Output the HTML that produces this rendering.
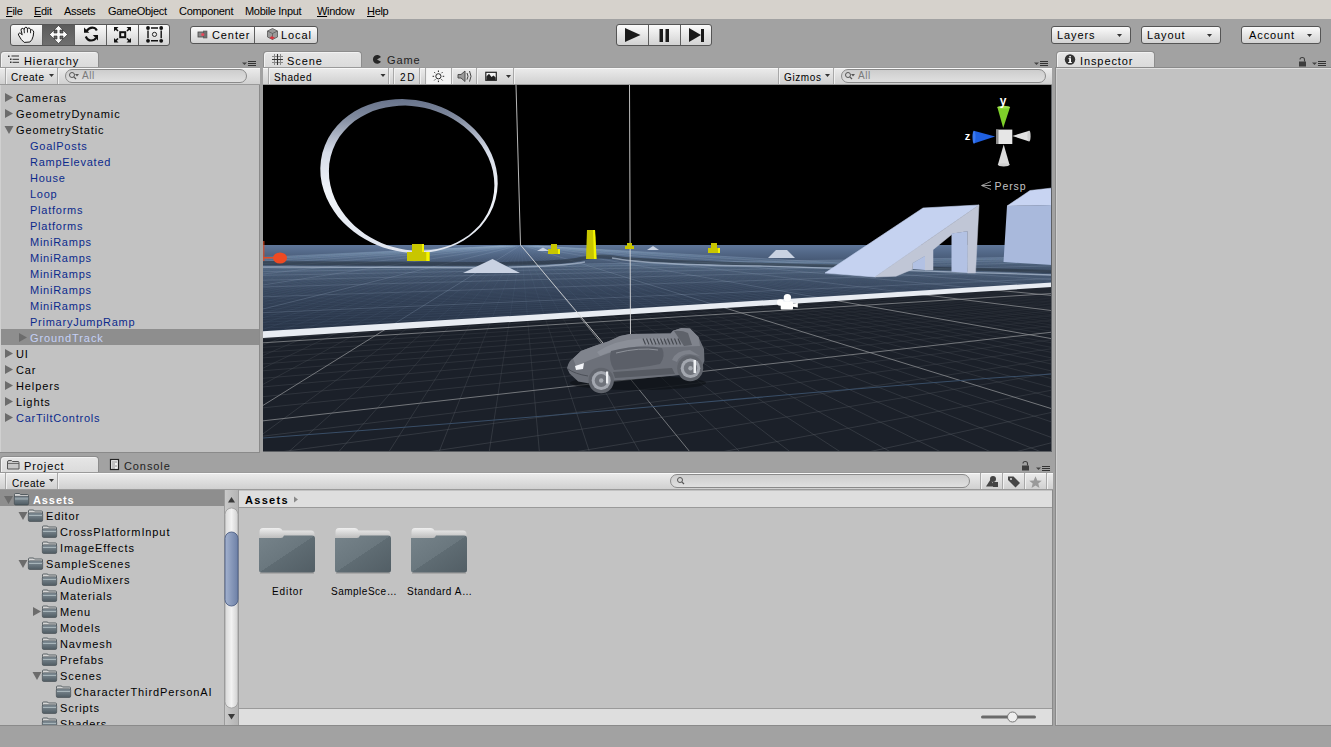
<!DOCTYPE html>
<html><head><meta charset="utf-8">
<style>
*{margin:0;padding:0;box-sizing:border-box}
html,body{width:1331px;height:747px;overflow:hidden;background:#a2a2a2;font-family:"Liberation Sans",sans-serif;font-size:11px;color:#000;position:relative}
.a{position:absolute}
.t{position:absolute;white-space:nowrap;line-height:13px;letter-spacing:0.9px}
.s{position:absolute;white-space:nowrap;line-height:12px;font-size:10px;letter-spacing:0.6px}
.menu{position:absolute;left:0;top:0;width:1331px;height:19px;background:#d6d2cc}
.menu span{position:absolute;top:5px;line-height:13px;color:#000;letter-spacing:-0.3px}
.btn{position:absolute;border:1px solid #555;border-radius:3px;background:linear-gradient(#fbfbfb,#d2d2d2);overflow:hidden}
.sep{position:absolute;top:0;bottom:0;width:1px;background:#5e5e5e}
.tab{position:absolute;height:17px;border-radius:4px 4px 0 0;background:linear-gradient(#e6e6e6,#dadada);border:1px solid #8d8d8d;border-bottom:none;box-shadow:inset 1px 1px 0 #f2f2f2}
.panel{position:absolute;background:#c2c2c2}
.tbar{position:absolute;height:18px;background:linear-gradient(#ececec,#d0d0d0);border-top:1px solid #9a9a9a;border-bottom:1px solid #9a9a9a;box-shadow:inset 0 1px 0 #f8f8f8}
.tsep{position:absolute;top:0;width:1px;height:16px;background:#a8a8a8;box-shadow:1px 0 0 #f0f0f0}
.search{position:absolute;height:14px;border:1px solid #8a8a8a;border-radius:7px;background:linear-gradient(#cdcdcd,#e0e0e0)}
.b{color:#0c2a8c;letter-spacing:0.75px}
.row{position:absolute;left:0;height:16px;width:100%}
.sel{background:#8e8e8e}
</style></head><body>
<!-- menu bar -->
<div class="menu">
<span style="left:6px"><u>F</u>ile</span><span style="left:34px"><u>E</u>dit</span><span style="left:64px">Assets</span><span style="left:108px">GameObject</span><span style="left:179px">Component</span><span style="left:245px">Mobile Input</span><span style="left:317px"><u>W</u>indow</span><span style="left:367px"><u>H</u>elp</span>
</div>

<!-- tools -->
<div class="btn" style="left:10px;top:24px;width:160px;height:22px">
 <div class="a" style="left:31px;top:0;width:32px;height:20px;background:linear-gradient(#5b5b5b,#6f6f6f)"></div>
 <div class="sep" style="left:31px"></div><div class="sep" style="left:63px"></div><div class="sep" style="left:95px"></div><div class="sep" style="left:127px"></div>
</div>
<div class="btn" style="left:190px;top:26px;width:128px;height:18px">
 <div class="sep" style="left:63px"></div>
 <span class="t" style="left:21px;top:2px">Center</span>
 <span class="t" style="left:90px;top:2px">Local</span>
</div>
<div class="btn" style="left:616px;top:24px;width:96px;height:22px">
 <div class="sep" style="left:31px"></div><div class="sep" style="left:63px"></div>
</div>
<div class="btn" style="left:1051px;top:26px;width:80px;height:18px"><span class="t" style="left:5px;top:2px">Layers</span></div>
<div class="btn" style="left:1141px;top:26px;width:80px;height:18px"><span class="t" style="left:5px;top:2px">Layout</span></div>
<div class="btn" style="left:1241px;top:26px;width:80px;height:18px"><span class="t" style="left:7px;top:2px">Account</span></div>

<!-- Hierarchy -->
<div class="tab" style="left:0;top:51px;width:99px"><span class="t" style="left:23px;top:3px">Hierarchy</span></div>
<div class="tbar" style="left:0;top:67px;width:260px">
 <div class="tsep" style="left:5px"></div><div class="tsep" style="left:57px"></div>
<span class="s" style="left:11px;top:4px">Create</span>
 <div class="search" style="left:65px;top:1px;width:182px"><span class="s" style="left:16px;top:0px;color:#7a7a7a">All</span></div>
</div>
<div class="panel" style="left:0;top:85px;width:260px;height:368px;border-right:1px solid #8a8a8a;border-bottom:1px solid #8a8a8a;box-shadow:inset 1px 0 0 #d0d0d0">
 <span class="t" style="left:16px;top:7px">Cameras</span>
 <span class="t" style="left:16px;top:23px">GeometryDynamic</span>
 <span class="t" style="left:16px;top:39px">GeometryStatic</span>
 <span class="t b" style="left:30px;top:55px">GoalPosts</span>
 <span class="t b" style="left:30px;top:71px">RampElevated</span>
 <span class="t b" style="left:30px;top:87px">House</span>
 <span class="t b" style="left:30px;top:103px">Loop</span>
 <span class="t b" style="left:30px;top:119px">Platforms</span>
 <span class="t b" style="left:30px;top:135px">Platforms</span>
 <span class="t b" style="left:30px;top:151px">MiniRamps</span>
 <span class="t b" style="left:30px;top:167px">MiniRamps</span>
 <span class="t b" style="left:30px;top:183px">MiniRamps</span>
 <span class="t b" style="left:30px;top:199px">MiniRamps</span>
 <span class="t b" style="left:30px;top:215px">MiniRamps</span>
 <span class="t b" style="left:30px;top:231px">PrimaryJumpRamp</span>
 <div class="a sel" style="left:1px;top:244px;width:258px;height:16px"></div>
 <span class="t" style="left:30px;top:247px;color:#c5d1f8">GroundTrack</span>
 <span class="t" style="left:16px;top:263px">UI</span>
 <span class="t" style="left:16px;top:279px">Car</span>
 <span class="t" style="left:16px;top:295px">Helpers</span>
 <span class="t" style="left:16px;top:311px">Lights</span>
 <span class="t b" style="left:16px;top:327px">CarTiltControls</span>
</div>

<!-- Scene -->
<div class="tab" style="left:263px;top:51px;width:99px"><span class="t" style="left:23px;top:3px">Scene</span></div>
<span class="t" style="left:387px;top:54px;color:#222">Game</span>
<div class="tbar" style="left:263px;top:67px;width:789px">
 <div class="tsep" style="left:5px"></div><div class="tsep" style="left:125px"></div>
 <span class="s" style="left:11px;top:4px">Shaded</span>
 <div class="tsep" style="left:130px"></div><div class="tsep" style="left:156px"></div>
 <span class="s" style="left:137px;top:4px;letter-spacing:1.8px">2D</span>
 <div class="a" style="left:163px;top:0;width:25px;height:16px;background:#f4f4f4"></div>
 <div class="tsep" style="left:162px"></div><div class="tsep" style="left:188px"></div><div class="tsep" style="left:213px"></div><div class="tsep" style="left:250px"></div>
 <div class="tsep" style="left:515px"></div><div class="tsep" style="left:570px"></div>
 <span class="s" style="left:521px;top:4px">Gizmos</span>
 <div class="search" style="left:578px;top:1px;width:205px"><span class="s" style="left:16px;top:0px;color:#7a7a7a">All</span></div>
</div>
<svg class="a" style="left:263px;top:85px" width="789" height="367" viewBox="263 85 789 367"><defs>
<linearGradient id="gfar" x1="0" y1="245" x2="0" y2="335" gradientUnits="userSpaceOnUse">
<stop offset="0" stop-color="#60779a"/>
<stop offset="0.1" stop-color="#506584"/>
<stop offset="0.25" stop-color="#3c4c64"/>
<stop offset="0.55" stop-color="#313f55"/>
<stop offset="1" stop-color="#283447"/>
</linearGradient>
<linearGradient id="gring" x1="0" y1="98" x2="0" y2="253" gradientUnits="userSpaceOnUse">
<stop offset="0" stop-color="#67728a"/>
<stop offset="0.12" stop-color="#7f899d"/>
<stop offset="0.35" stop-color="#d6dce8"/>
<stop offset="0.6" stop-color="#f1f4f9"/>
<stop offset="1" stop-color="#dfe4ee"/>
</linearGradient>
<linearGradient id="gfade" x1="0" y1="284" x2="0" y2="452" gradientUnits="userSpaceOnUse"><stop offset="0" stop-color="#fff" stop-opacity="0.15"/><stop offset="0.35" stop-color="#fff" stop-opacity="0.6"/><stop offset="1" stop-color="#fff" stop-opacity="1"/></linearGradient>
<mask id="mnear" maskUnits="userSpaceOnUse" x="263" y="85" width="789" height="367"><rect x="263" y="284" width="789" height="168" fill="url(#gfade)"/></mask>
<clipPath id="cnear"><polygon points="263,336 1052,286 1052,452 263,452"/></clipPath>
<clipPath id="cfar"><polygon points="263,245 1052,245 1052,284 263,334"/></clipPath>
</defs>
<rect x="263" y="85" width="789" height="367" fill="#000"/>
<polygon points="263,245 1052,245 1052,285 263,334" fill="url(#gfar)"/>
<polygon points="263,335 1052,285 1052,452 263,452" fill="#1b2029"/>
<g clip-path="url(#cnear)" fill="none">
<path d="M250.0 258.1L501.6 245.9M250.0 258.2L501.8 245.9M250.0 258.4L502.1 245.9M250.0 258.5L502.3 245.9M250.0 258.7L502.5 245.9M250.0 258.9L502.8 245.9M250.0 259.0L503.0 245.9M250.0 259.2L503.2 245.9M250.0 259.4L503.4 245.9M250.0 259.8L503.9 245.9M250.0 260.0L504.1 245.9M250.0 260.2L504.4 245.9M250.0 260.4L504.6 245.9M250.0 260.6L504.8 245.9M250.0 260.8L505.0 245.9M250.0 261.0L505.3 245.9M250.0 261.3L505.5 245.9M250.0 261.5L505.7 245.9M250.0 262.0L506.2 245.9M250.0 262.3L506.4 245.9M250.0 262.6L506.6 245.9M250.0 262.8L506.9 245.9M250.0 263.1L507.1 245.9M250.0 263.4L507.3 245.9M250.0 263.7L507.6 245.9M250.0 264.1L507.8 245.9M250.0 264.4L508.0 245.9M250.0 265.1L508.5 245.9M250.0 265.5L508.7 245.9M250.0 265.8L508.9 245.9M250.0 266.2L509.1 245.9M250.0 266.6L509.4 245.9M250.0 267.1L509.6 245.9M250.0 267.5L509.8 245.9M250.0 268.0L510.1 245.9M250.0 268.5L510.3 245.9M250.0 269.5L510.7 245.9M250.0 270.0L511.0 245.9M250.0 270.6L511.2 245.9M250.0 271.2L511.4 245.9M250.0 271.8L511.6 245.9M250.0 272.5L511.9 245.9M250.0 273.2L512.1 245.9M250.0 273.9L512.3 245.9M250.0 274.7L512.5 245.9M250.0 276.4L513.0 245.9M250.0 277.3L513.2 245.9M250.0 278.2L513.5 245.9M250.0 279.2L513.7 245.9M250.0 280.3L513.9 245.9M250.0 281.5L514.1 245.9M250.0 282.7L514.4 245.9M250.0 284.0L514.6 245.9M250.0 285.4L514.8 245.9M250.0 288.6L515.3 245.9M250.0 290.4L515.5 245.9M250.0 292.3L515.7 245.9M250.0 294.4L515.9 245.9M250.0 296.7L516.2 245.9M250.0 299.2L516.4 245.9M250.0 301.9L516.6 245.9M250.0 305.0L516.8 245.9M250.0 308.4L517.1 245.9M250.0 316.5L517.5 245.9M250.0 321.4L517.7 245.9M250.0 327.0L518.0 245.9M944.4 470.0L1065.0 439.3M250.0 333.5L518.2 245.9M784.7 470.0L1065.0 409.5M250.0 341.1L518.4 245.9M624.9 470.0L1065.0 387.7M250.0 350.1L518.6 245.9M465.1 470.0L1065.0 371.0M250.0 361.0L518.8 245.9M305.4 470.0L1065.0 357.7M250.0 374.4L519.1 245.9M250.0 456.0L1065.0 347.0M250.0 391.4L519.3 245.9M250.0 437.7L1065.0 338.2M250.0 443.4L519.7 245.9M250.0 409.2L1065.0 324.4M268.2 470.0L520.0 245.9M250.0 397.9L1065.0 318.9M322.7 470.0L520.2 245.9M250.0 388.1L1065.0 314.2M377.3 470.0L520.4 245.9M250.0 379.4L1065.0 310.0M431.9 470.0L520.6 245.9M250.0 371.8L1065.0 306.3M486.4 470.0L520.9 245.9M250.0 364.9L1065.0 303.0M541.0 470.0L521.1 245.9M250.0 358.8L1065.0 300.0M595.5 470.0L521.3 245.9M250.0 353.2L1065.0 297.3M650.1 470.0L521.5 245.9M250.0 348.2L1065.0 294.9M759.2 470.0L522.0 245.9M250.0 339.4L1065.0 290.7M813.8 470.0L522.2 245.9M250.0 335.6L1065.0 288.8M868.4 470.0L522.4 245.9M250.0 332.0L1065.0 287.1M922.9 470.0L522.6 245.9M250.0 328.8L1065.0 285.5M977.5 470.0L522.9 245.9M250.0 325.7L1065.0 284.0M1032.0 470.0L523.1 245.9M250.0 322.9L1065.0 282.7M1065.0 461.4L523.3 245.9M250.0 320.2L1065.0 281.4M1065.0 442.4L523.5 245.9M250.0 317.8L1065.0 280.2M1065.0 426.4L523.8 245.9M250.0 315.5L1065.0 279.1M1065.0 401.2L524.2 245.9M250.0 311.3L1065.0 277.0M1065.0 391.0L524.4 245.9M250.0 309.4L1065.0 276.1M1065.0 382.1L524.6 245.9M250.0 307.5L1065.0 275.2M1065.0 374.2L524.9 245.9M250.0 305.8L1065.0 274.4M1065.0 367.1L525.1 245.9M250.0 304.2L1065.0 273.6M1065.0 360.8L525.3 245.9M250.0 302.7L1065.0 272.9M1065.0 355.1L525.5 245.9M250.0 301.2L1065.0 272.2M1065.0 350.0L525.8 245.9M250.0 299.8L1065.0 271.5M1065.0 345.3L526.0 245.9M250.0 298.5L1065.0 270.9M1065.0 337.1L526.4 245.9M250.0 296.0L1065.0 269.7M1065.0 333.4L526.6 245.9M250.0 294.9L1065.0 269.1M1065.0 330.1L526.9 245.9M250.0 293.8L1065.0 268.6M1065.0 327.0L527.1 245.9M250.0 292.8L1065.0 268.1M1065.0 324.1L527.3 245.9M250.0 291.8L1065.0 267.6M1065.0 321.4L527.5 245.9M250.0 290.8L1065.0 267.1M1065.0 318.9L527.7 245.9M250.0 289.9L1065.0 266.7M1065.0 316.5L528.0 245.9M250.0 289.0L1065.0 266.3M1065.0 314.3L528.2 245.9M250.0 288.1L1065.0 265.8M1065.0 310.3L528.6 245.9M250.0 286.5L1065.0 265.1M1065.0 308.4L528.8 245.9M250.0 285.8L1065.0 264.7M1065.0 306.7L529.1 245.9M250.0 285.0L1065.0 264.3M1065.0 305.0L529.3 245.9M250.0 284.3L1065.0 264.0M1065.0 303.5L529.5 245.9M250.0 283.6L1065.0 263.7M1065.0 302.0L529.7 245.9M250.0 283.0L1065.0 263.4M1065.0 300.6L529.9 245.9M250.0 282.3L1065.0 263.0M1065.0 299.2L530.2 245.9M250.0 281.7L1065.0 262.7M1065.0 297.9L530.4 245.9M250.0 281.1L1065.0 262.5M1065.0 295.6L530.8 245.9M250.0 280.0L1065.0 261.9M1065.0 294.4L531.0 245.9M250.0 279.4L1065.0 261.6M1065.0 293.4L531.3 245.9M250.0 278.9L1065.0 261.4M1065.0 292.4L531.5 245.9M250.0 278.4L1065.0 261.1M1065.0 291.4L531.7 245.9M250.0 277.9L1065.0 260.9M1065.0 290.4L531.9 245.9M250.0 277.4L1065.0 260.7M1065.0 289.5L532.1 245.9M250.0 277.0L1065.0 260.5M1065.0 288.7L532.4 245.9M250.0 276.5L1065.0 260.2M1065.0 287.8L532.6 245.9M250.0 276.1L1065.0 260.0M1065.0 286.3L533.0 245.9M250.0 275.2L1065.0 259.6M1065.0 285.5L533.2 245.9M250.0 274.8L1065.0 259.4M1065.0 284.8L533.5 245.9M250.0 274.4L1065.0 259.2M1065.0 284.1L533.7 245.9M250.0 274.0L1065.0 259.0M1065.0 283.4L533.9 245.9M250.0 273.7L1065.0 258.9M1065.0 282.8L534.1 245.9M250.0 273.3L1065.0 258.7M1065.0 282.2L534.3 245.9M250.0 272.9L1065.0 258.5M1065.0 281.6L534.6 245.9M250.0 272.6L1065.0 258.3M1065.0 281.0L534.8 245.9M250.0 272.3L1065.0 258.2M1065.0 279.9L535.2 245.9M250.0 271.6L1065.0 257.9M1065.0 279.3L535.4 245.9M250.0 271.3L1065.0 257.7M1065.0 278.8L535.6 245.9M250.0 271.0L1065.0 257.6M1065.0 278.3L535.9 245.9M250.0 270.7L1065.0 257.4M1065.0 277.8L536.1 245.9M250.0 270.4L1065.0 257.3M1065.0 277.3L536.3 245.9M250.0 270.1L1065.0 257.1M1065.0 276.9L536.5 245.9M250.0 269.8L1065.0 257.0M1065.0 276.4L536.7 245.9M250.0 269.5L1065.0 256.9M1065.0 276.0L536.9 245.9M250.0 269.3L1065.0 256.7" stroke="#5a5f66" stroke-width="0.7" stroke-opacity="0.6" mask="url(#mnear)"/>
<path d="M250.0 257.9L501.4 245.9M250.0 259.6L503.7 245.9M250.0 261.8L506.0 245.9M250.0 264.7L508.2 245.9M250.0 269.0L510.5 245.9M250.0 275.5L512.8 245.9M250.0 287.0L515.0 245.9M250.0 312.2L517.3 245.9M250.0 413.5L519.5 245.9M250.0 422.3L1065.0 330.7M704.7 470.0L521.8 245.9M250.0 343.6L1065.0 292.7M1065.0 412.8L524.0 245.9M250.0 313.3L1065.0 278.0M1065.0 341.0L526.2 245.9M250.0 297.2L1065.0 270.3M1065.0 312.2L528.4 245.9M250.0 287.3L1065.0 265.5M1065.0 296.7L530.6 245.9M250.0 280.5L1065.0 262.2M1065.0 287.0L532.8 245.9M250.0 275.6L1065.0 259.8M1065.0 280.4L535.0 245.9M250.0 271.9L1065.0 258.0M1065.0 275.6L537.2 245.9M250.0 269.0L1065.0 256.6" stroke="#8a8c90" stroke-width="1" stroke-opacity="0.8"/>
</g>
<g clip-path="url(#cfar)" fill="none">
<path d="M250.0 258.1L501.6 245.9M250.0 258.2L501.8 245.9M250.0 258.4L502.1 245.9M250.0 258.5L502.3 245.9M250.0 258.7L502.5 245.9M250.0 258.9L502.8 245.9M250.0 259.0L503.0 245.9M250.0 259.2L503.2 245.9M250.0 259.4L503.4 245.9M250.0 259.8L503.9 245.9M250.0 260.0L504.1 245.9M250.0 260.2L504.4 245.9M250.0 260.4L504.6 245.9M250.0 260.6L504.8 245.9M250.0 260.8L505.0 245.9M250.0 261.0L505.3 245.9M250.0 261.3L505.5 245.9M250.0 261.5L505.7 245.9M250.0 262.0L506.2 245.9M250.0 262.3L506.4 245.9M250.0 262.6L506.6 245.9M250.0 262.8L506.9 245.9M250.0 263.1L507.1 245.9M250.0 263.4L507.3 245.9M250.0 263.7L507.6 245.9M250.0 264.1L507.8 245.9M250.0 264.4L508.0 245.9M250.0 265.1L508.5 245.9M250.0 265.5L508.7 245.9M250.0 265.8L508.9 245.9M250.0 266.2L509.1 245.9M250.0 266.6L509.4 245.9M250.0 267.1L509.6 245.9M250.0 267.5L509.8 245.9M250.0 268.0L510.1 245.9M250.0 268.5L510.3 245.9M250.0 269.5L510.7 245.9M250.0 270.0L511.0 245.9M250.0 270.6L511.2 245.9M250.0 271.2L511.4 245.9M250.0 271.8L511.6 245.9M250.0 272.5L511.9 245.9M250.0 273.2L512.1 245.9M250.0 273.9L512.3 245.9M250.0 274.7L512.5 245.9M250.0 276.4L513.0 245.9M250.0 277.3L513.2 245.9M250.0 278.2L513.5 245.9M250.0 279.2L513.7 245.9M250.0 280.3L513.9 245.9M250.0 281.5L514.1 245.9M250.0 282.7L514.4 245.9M250.0 284.0L514.6 245.9M250.0 285.4L514.8 245.9M250.0 288.6L515.3 245.9M250.0 290.4L515.5 245.9M250.0 292.3L515.7 245.9M250.0 294.4L515.9 245.9M250.0 296.7L516.2 245.9M250.0 299.2L516.4 245.9M250.0 301.9L516.6 245.9M250.0 305.0L516.8 245.9M250.0 308.4L517.1 245.9M250.0 316.5L517.5 245.9M250.0 321.4L517.7 245.9M250.0 327.0L518.0 245.9M944.4 470.0L1065.0 439.3M250.0 333.5L518.2 245.9M784.7 470.0L1065.0 409.5M250.0 341.1L518.4 245.9M624.9 470.0L1065.0 387.7M250.0 350.1L518.6 245.9M465.1 470.0L1065.0 371.0M250.0 361.0L518.8 245.9M305.4 470.0L1065.0 357.7M250.0 374.4L519.1 245.9M250.0 456.0L1065.0 347.0M250.0 391.4L519.3 245.9M250.0 437.7L1065.0 338.2M250.0 443.4L519.7 245.9M250.0 409.2L1065.0 324.4M268.2 470.0L520.0 245.9M250.0 397.9L1065.0 318.9M322.7 470.0L520.2 245.9M250.0 388.1L1065.0 314.2M377.3 470.0L520.4 245.9M250.0 379.4L1065.0 310.0M431.9 470.0L520.6 245.9M250.0 371.8L1065.0 306.3M486.4 470.0L520.9 245.9M250.0 364.9L1065.0 303.0M541.0 470.0L521.1 245.9M250.0 358.8L1065.0 300.0M595.5 470.0L521.3 245.9M250.0 353.2L1065.0 297.3M650.1 470.0L521.5 245.9M250.0 348.2L1065.0 294.9M759.2 470.0L522.0 245.9M250.0 339.4L1065.0 290.7M813.8 470.0L522.2 245.9M250.0 335.6L1065.0 288.8M868.4 470.0L522.4 245.9M250.0 332.0L1065.0 287.1M922.9 470.0L522.6 245.9M250.0 328.8L1065.0 285.5M977.5 470.0L522.9 245.9M250.0 325.7L1065.0 284.0M1032.0 470.0L523.1 245.9M250.0 322.9L1065.0 282.7M1065.0 461.4L523.3 245.9M250.0 320.2L1065.0 281.4M1065.0 442.4L523.5 245.9M250.0 317.8L1065.0 280.2M1065.0 426.4L523.8 245.9M250.0 315.5L1065.0 279.1M1065.0 401.2L524.2 245.9M250.0 311.3L1065.0 277.0M1065.0 391.0L524.4 245.9M250.0 309.4L1065.0 276.1M1065.0 382.1L524.6 245.9M250.0 307.5L1065.0 275.2M1065.0 374.2L524.9 245.9M250.0 305.8L1065.0 274.4M1065.0 367.1L525.1 245.9M250.0 304.2L1065.0 273.6M1065.0 360.8L525.3 245.9M250.0 302.7L1065.0 272.9M1065.0 355.1L525.5 245.9M250.0 301.2L1065.0 272.2M1065.0 350.0L525.8 245.9M250.0 299.8L1065.0 271.5M1065.0 345.3L526.0 245.9M250.0 298.5L1065.0 270.9M1065.0 337.1L526.4 245.9M250.0 296.0L1065.0 269.7M1065.0 333.4L526.6 245.9M250.0 294.9L1065.0 269.1M1065.0 330.1L526.9 245.9M250.0 293.8L1065.0 268.6M1065.0 327.0L527.1 245.9M250.0 292.8L1065.0 268.1M1065.0 324.1L527.3 245.9M250.0 291.8L1065.0 267.6M1065.0 321.4L527.5 245.9M250.0 290.8L1065.0 267.1M1065.0 318.9L527.7 245.9M250.0 289.9L1065.0 266.7M1065.0 316.5L528.0 245.9M250.0 289.0L1065.0 266.3M1065.0 314.3L528.2 245.9M250.0 288.1L1065.0 265.8M1065.0 310.3L528.6 245.9M250.0 286.5L1065.0 265.1M1065.0 308.4L528.8 245.9M250.0 285.8L1065.0 264.7M1065.0 306.7L529.1 245.9M250.0 285.0L1065.0 264.3M1065.0 305.0L529.3 245.9M250.0 284.3L1065.0 264.0M1065.0 303.5L529.5 245.9M250.0 283.6L1065.0 263.7M1065.0 302.0L529.7 245.9M250.0 283.0L1065.0 263.4M1065.0 300.6L529.9 245.9M250.0 282.3L1065.0 263.0M1065.0 299.2L530.2 245.9M250.0 281.7L1065.0 262.7M1065.0 297.9L530.4 245.9M250.0 281.1L1065.0 262.5M1065.0 295.6L530.8 245.9M250.0 280.0L1065.0 261.9M1065.0 294.4L531.0 245.9M250.0 279.4L1065.0 261.6M1065.0 293.4L531.3 245.9M250.0 278.9L1065.0 261.4M1065.0 292.4L531.5 245.9M250.0 278.4L1065.0 261.1M1065.0 291.4L531.7 245.9M250.0 277.9L1065.0 260.9M1065.0 290.4L531.9 245.9M250.0 277.4L1065.0 260.7M1065.0 289.5L532.1 245.9M250.0 277.0L1065.0 260.5M1065.0 288.7L532.4 245.9M250.0 276.5L1065.0 260.2M1065.0 287.8L532.6 245.9M250.0 276.1L1065.0 260.0M1065.0 286.3L533.0 245.9M250.0 275.2L1065.0 259.6M1065.0 285.5L533.2 245.9M250.0 274.8L1065.0 259.4M1065.0 284.8L533.5 245.9M250.0 274.4L1065.0 259.2M1065.0 284.1L533.7 245.9M250.0 274.0L1065.0 259.0M1065.0 283.4L533.9 245.9M250.0 273.7L1065.0 258.9M1065.0 282.8L534.1 245.9M250.0 273.3L1065.0 258.7M1065.0 282.2L534.3 245.9M250.0 272.9L1065.0 258.5M1065.0 281.6L534.6 245.9M250.0 272.6L1065.0 258.3M1065.0 281.0L534.8 245.9M250.0 272.3L1065.0 258.2M1065.0 279.9L535.2 245.9M250.0 271.6L1065.0 257.9M1065.0 279.3L535.4 245.9M250.0 271.3L1065.0 257.7M1065.0 278.8L535.6 245.9M250.0 271.0L1065.0 257.6M1065.0 278.3L535.9 245.9M250.0 270.7L1065.0 257.4M1065.0 277.8L536.1 245.9M250.0 270.4L1065.0 257.3M1065.0 277.3L536.3 245.9M250.0 270.1L1065.0 257.1M1065.0 276.9L536.5 245.9M250.0 269.8L1065.0 257.0M1065.0 276.4L536.7 245.9M250.0 269.5L1065.0 256.9M1065.0 276.0L536.9 245.9M250.0 269.3L1065.0 256.7" stroke="#8ea4c4" stroke-width="0.6" stroke-opacity="0.12"/>
<path d="M250.0 257.9L501.4 245.9M250.0 259.6L503.7 245.9M250.0 261.8L506.0 245.9M250.0 264.7L508.2 245.9M250.0 269.0L510.5 245.9M250.0 275.5L512.8 245.9M250.0 287.0L515.0 245.9M250.0 312.2L517.3 245.9M250.0 413.5L519.5 245.9M250.0 422.3L1065.0 330.7M704.7 470.0L521.8 245.9M250.0 343.6L1065.0 292.7M1065.0 412.8L524.0 245.9M250.0 313.3L1065.0 278.0M1065.0 341.0L526.2 245.9M250.0 297.2L1065.0 270.3M1065.0 312.2L528.4 245.9M250.0 287.3L1065.0 265.5M1065.0 296.7L530.6 245.9M250.0 280.5L1065.0 262.2M1065.0 287.0L532.8 245.9M250.0 275.6L1065.0 259.8M1065.0 280.4L535.0 245.9M250.0 271.9L1065.0 258.0M1065.0 275.6L537.2 245.9M250.0 269.0L1065.0 256.6" stroke="#9fb2cc" stroke-width="0.8" stroke-opacity="0.3"/>
</g>
<!-- track bands -->
<path d="M263 261 L470 262 Q560 262 580 257 Q600 252 625 257 Q700 262 820 264 L1052 270 L1052 273 L820 267 Q700 265 625 261 Q600 256 580 261 Q560 266 470 266 L263 265 Z" fill="#27313d" opacity="0.55"/>
<path d="M263 267 L480 267.5 Q560 267 585 262 M612 258 Q650 265 760 266 L1052 275" stroke="#a9b8cc" stroke-width="1.3" fill="none" opacity="0.75"/>
<path d="M263 438 Q470 423 700 402.5 T1052 374" stroke="#3d536e" stroke-width="1.1" fill="none" opacity="0.9"/>
<!-- white line -->
<polygon points="263,331.3 1052,282.5 1052,287 263,338" fill="#e8ecf2"/>
<!-- ring -->
<path fill-rule="evenodd" fill="url(#gring)" d="M497.4 176.0 L497.7 183.8 L497.1 191.6 L495.6 199.2 L493.2 206.7 L489.9 213.7 L485.7 220.3 L480.9 226.4 L475.5 231.8 L469.6 236.6 L463.3 240.7 L456.8 244.2 L450.1 247.1 L443.2 249.3 L436.3 251.0 L429.4 252.2 L422.6 252.8 L415.8 253.0 L409.0 252.7 L402.4 252.0 L395.8 250.8 L389.4 249.3 L383.1 247.4 L376.8 245.0 L370.8 242.3 L364.8 239.1 L359.0 235.6 L353.5 231.6 L348.1 227.1 L343.0 222.2 L338.2 216.9 L333.9 211.1 L330.0 204.8 L326.6 198.1 L323.9 191.0 L321.8 183.6 L320.6 176.0 L320.3 168.3 L320.9 160.5 L322.4 152.8 L324.9 145.4 L328.2 138.3 L332.3 131.7 L337.1 125.7 L342.5 120.2 L348.4 115.4 L354.7 111.3 L361.3 107.8 L368.0 105.0 L374.8 102.7 L381.7 101.0 L388.6 99.9 L395.5 99.2 L402.3 99.1 L409.0 99.4 L415.7 100.1 L422.2 101.2 L428.7 102.8 L435.0 104.7 L441.2 107.0 L447.3 109.8 L453.2 112.9 L459.0 116.5 L464.6 120.5 L469.9 124.9 L475.0 129.8 L479.8 135.2 L484.2 141.0 L488.1 147.2 L491.5 153.9 L494.2 161.0 L496.2 168.4 Z M494.0 178.2 L494.4 185.4 L493.9 192.7 L492.6 199.9 L490.4 206.8 L487.4 213.5 L483.6 219.7 L479.2 225.5 L474.1 230.6 L468.7 235.2 L462.8 239.1 L456.6 242.5 L450.3 245.2 L443.9 247.3 L437.4 248.9 L430.9 250.0 L424.4 250.6 L418.0 250.7 L411.6 250.4 L405.4 249.7 L399.2 248.5 L393.2 247.0 L387.2 245.2 L381.4 242.9 L375.8 240.3 L370.2 237.3 L364.9 233.9 L359.7 230.1 L354.7 225.9 L350.0 221.3 L345.6 216.3 L341.6 210.8 L337.9 205.0 L334.8 198.7 L332.3 192.2 L330.4 185.3 L329.2 178.2 L328.9 170.9 L329.3 163.7 L330.7 156.5 L332.9 149.5 L335.9 142.8 L339.6 136.6 L344.1 130.9 L349.1 125.7 L354.6 121.1 L360.5 117.2 L366.6 113.9 L372.9 111.1 L379.4 109.0 L385.9 107.4 L392.4 106.4 L398.9 105.8 L405.3 105.6 L411.6 106.0 L417.9 106.7 L424.0 107.8 L430.1 109.3 L436.0 111.2 L441.8 113.4 L447.5 116.0 L453.0 119.1 L458.4 122.4 L463.6 126.2 L468.5 130.4 L473.2 135.0 L477.6 140.1 L481.7 145.5 L485.3 151.4 L488.4 157.6 L491.0 164.2 L492.9 171.1 Z"/>
<!-- thin lines -->
<path d="M516 85 L520.5 245 L603 343" stroke="#d8d8d8" stroke-width="1" fill="none" opacity="0.85"/>
<path d="M629.5 85 L630.5 336" stroke="#e0e0e0" stroke-width="1" fill="none" opacity="0.85"/>
<!-- yellow posts -->
<g fill="#c8c600">
<rect x="412" y="244" width="12" height="8"/><rect x="407" y="252" width="22.5" height="9"/>
<rect x="551" y="244" width="6" height="5"/><rect x="548" y="249" width="12" height="5"/>
<polygon points="587,230 595,230 596.5,259 586,259"/>
<rect x="627" y="243" width="5" height="3"/><rect x="625" y="246" width="9" height="3"/>
<rect x="711" y="243" width="6" height="5"/><rect x="708" y="248" width="12" height="5"/>
</g>
<g fill="#f4f400">
<rect x="422" y="244" width="2" height="8"/><rect x="426.3" y="252" width="3.2" height="9"/>
<rect x="558" y="249" width="2" height="5"/><polygon points="593,230 595,230 596.5,259 594,259"/><rect x="718" y="248" width="2" height="5"/>
</g>
<g fill="#c9d2e2">
<polygon points="463,273 492.5,259 520,273"/>
<polygon points="537,251 543,247.5 549,251"/>
<polygon points="647,250 653,246 659,250"/>
<polygon points="768,258 776,250 787,250 795,258"/>
</g>
<!-- red object -->
<ellipse cx="280" cy="258" rx="7" ry="5.6" fill="#ee4a22"/>
<rect x="263" y="257" width="10" height="1.5" fill="#e04a22"/>
<rect x="263" y="241" width="1.5" height="20" fill="#e04a22" opacity="0.7"/>
<!-- big ramp -->
<polygon points="825,273 923,208 979,205 875,277" fill="#c5d2f0" stroke="#c5d2f0" stroke-width="0.6"/>
<polygon points="875,277 979,205 975.5,273 967.4,273 967.4,231.2 953,233.5 933,249.7 933,270 925,270 925,256 912.7,263 912.7,269.2 896,276.2" fill="#c0c6d6" stroke="#c0c6d6" stroke-width="0.5"/>
<polygon points="951.5,233.5 967.4,231.2 967.4,272.7 951.5,271.8" fill="#b3c2e4"/>
<polygon points="913,263 925,256 925,270 913,269" fill="#b2c1e3"/>
<!-- box -->
<polygon points="1007,206 1030,190.5 1052,188 1052,205" fill="#c8d4f2" stroke="#c8d4f2" stroke-width="0.5"/>
<polygon points="1007,206 1052,205 1052,265 1003.5,262" fill="#a9b9dc"/>
<!-- camera icon -->
<g fill="#fff">
<circle cx="780.3" cy="302.5" r="3.3"/><circle cx="787.4" cy="297.8" r="3.7"/>
<rect x="780.7" y="301.4" width="12.3" height="8.2" rx="1"/><polygon points="793,304 797.8,302.8 797.8,307.6 793,306.8"/>
</g>
<!-- car -->
<g>
<ellipse cx="638" cy="383" rx="68" ry="7" fill="#0b0e13" opacity="0.55"/>
<path d="M567 368 Q569 360 573 358.5 L581 351 L595 345.7 L608 341.4 L620 336 L630 334 L670.7 333.4 L673 330.7 L681.4 328 L690 328.6 L698.5 337 L704 349 L704.4 360.7 L700.7 370.3 L690 374 L672.8 375.7 L630 379.4 L612 381 L588 383.2 L578.2 381.6 L569.6 373.5 Z" fill="#6c7079"/>
<path d="M573 358.5 L581 351 L595 345.7 L608 341.4 L620 336 L630 334 L670.7 333.4 L673 330.7 L681.4 328 L690 328.6 L698.5 337 L700 346 L672 347 L640 348 L612 352 L590 360 L576 366 Z" fill="#80848d"/>
<path d="M597 352 Q615 340 640 338.5 L668 338 Q660 344 640 346 Q615 349 600 356 Z" fill="#8c9099" opacity="0.9"/>
<path d="M611 351 Q640 344 662 348 Q666 356 660 364 Q640 368 614 370 Q608 360 611 351 Z" fill="#5b5f68"/>
<path d="M616 353 Q640 347 658 350" stroke="#9a9ea6" stroke-width="0.8" fill="none"/>
<g stroke="#42464d" stroke-width="1.1"><path d="M643 338.5 L645.5 344.5 M646.5 338.5 L649 344.5 M650 338.5 L652.5 344.5 M653.5 338.5 L656 344.5 M657 338.5 L659.5 344.5 M660.5 338.5 L663 344.5 M664 338.5 L666.5 344.5 M667.5 338.5 L670 344.5 M671 338.5 L673.5 344.5 M674.5 338.5 L677 344.5 M678 338.5 L680.5 344.5 M681.5 338.5 L684 344.5"/></g>
<path d="M674 331 Q682 330 688 333 L692 345 L684 346 Z" fill="#5e626a"/>
<path d="M613 372 L672 368 L675 374 L615 378 Z" fill="#575b63"/>
<path d="M575 366 L584 363 L583 369 L576 370 Z" fill="#f2f4f8"/>
<path d="M568 369 Q575 374 588 376" stroke="#4c5058" stroke-width="1" fill="none"/>
<circle cx="601.2" cy="380.5" r="12.7" fill="#60646c"/>
<circle cx="601.2" cy="380.5" r="9.5" fill="#a3a7af"/>
<circle cx="601.2" cy="380.5" r="6.5" fill="#6f737b"/>
<circle cx="601.2" cy="380.5" r="2.2" fill="#a8acb3"/>
<rect x="606" y="371.5" width="2.2" height="12" fill="#f0f2f5"/>
<circle cx="690.2" cy="368.2" r="13" fill="#60646c"/>
<circle cx="690.5" cy="368.2" r="9.8" fill="#a3a7af"/>
<circle cx="690.5" cy="368.2" r="6.7" fill="#6f737b"/>
<circle cx="690.5" cy="368.2" r="2.2" fill="#a8acb3"/>
<rect x="693.5" y="360" width="2.5" height="13" fill="#f0f2f5"/>
<path d="M672 360 Q676 350 690 350 L700 356 L690 354 Q680 354 677 362 Z" fill="#7e828b"/>
</g>
<!-- gizmo -->
<polygon points="997.3,107 1010.1,107 1003.2,128" fill="#7ed02a"/><ellipse cx="1003.7" cy="107.2" rx="6.4" ry="1.4" fill="#9ee04a"/>
<polygon points="973.7,130.7 973.7,143.5 995.1,136.6" fill="#2060e0"/><ellipse cx="974" cy="137.1" rx="1.5" ry="6.4" fill="#3a78f0"/>
<polygon points="1029.4,130.7 1029.4,141.4 1012.3,136" fill="#e2e2e2"/><ellipse cx="1029" cy="136" rx="1.6" ry="5.35" fill="#cfcfcf"/>
<polygon points="1003.7,144.6 997.8,165 1009.6,165" fill="#dcdcdc"/><ellipse cx="1003.7" cy="164.8" rx="5.9" ry="1.6" fill="#cfcfcf"/>
<rect x="996" y="129.6" width="16.3" height="14.4" fill="#e6e6e6"/>
<rect x="996" y="129.6" width="2.5" height="14.4" fill="#8a8a8a"/>
<text x="1003" y="105" font-family="Liberation Sans" font-size="12" font-weight="bold" fill="#fff" text-anchor="middle">y</text>
<text x="967.5" y="140" font-family="Liberation Sans" font-size="11" font-weight="bold" fill="#fff" text-anchor="middle">z</text>
<path d="M991 181.5 L981.5 185.5 L991 189.5 M991 185.5 L982 185.5" stroke="#bdbdbd" stroke-width="0.8" fill="none"/>
<text x="994.5" y="189.5" font-family="Liberation Sans" font-size="10.5" fill="#c4c4c4" letter-spacing="0.9">Persp</text>
<rect x="1051" y="85" width="1" height="367" fill="#5d6064"/><rect x="263" y="451" width="789" height="1" fill="#5d6064"/></svg>

<!-- Inspector -->
<div class="tab" style="left:1056px;top:51px;width:99px"><span class="t" style="left:23px;top:3px">Inspector</span></div>
<div class="panel" style="left:1055px;top:67px;width:276px;height:659px;border:1px solid #8a8a8a;border-right:none;box-shadow:inset 0 1px 0 #e2e2e2,inset 1px 0 0 #d0d0d0"></div>

<!-- Project -->
<div class="tab" style="left:0;top:456px;width:99px"><span class="t" style="left:23px;top:3px">Project</span></div>
<span class="t" style="left:124px;top:460px;color:#222">Console</span>
<div class="tbar" style="left:0;top:472px;width:1053px">
 <div class="tsep" style="left:5px"></div><div class="tsep" style="left:57px"></div>
 <span class="s" style="left:12px;top:5px">Create</span>
 <div class="search" style="left:670px;top:1px;width:300px"></div>
 <div class="tsep" style="left:980px"></div><div class="tsep" style="left:1002px"></div><div class="tsep" style="left:1024px"></div><div class="tsep" style="left:1046px"></div>
</div>
<div class="panel" style="left:0;top:490px;width:1053px;height:236px;border-right:1px solid #8a8a8a;border-bottom:1px solid #8a8a8a;overflow:hidden">
 <div class="a sel" style="left:0;top:0;width:224px;height:16px"></div>
 <span class="t" style="left:33px;top:4px;color:#fff;font-weight:bold">Assets</span>
 <span class="t" style="left:46px;top:20px">Editor</span>
 <span class="t" style="left:60px;top:36px">CrossPlatformInput</span>
 <span class="t" style="left:60px;top:52px">ImageEffects</span>
 <span class="t" style="left:46px;top:68px">SampleScenes</span>
 <span class="t" style="left:60px;top:84px">AudioMixers</span>
 <span class="t" style="left:60px;top:100px">Materials</span>
 <span class="t" style="left:60px;top:116px">Menu</span>
 <span class="t" style="left:60px;top:132px">Models</span>
 <span class="t" style="left:60px;top:148px">Navmesh</span>
 <span class="t" style="left:60px;top:164px">Prefabs</span>
 <span class="t" style="left:60px;top:180px">Scenes</span>
 <span class="t" style="left:74px;top:196px">CharacterThirdPersonAI</span>
 <span class="t" style="left:60px;top:212px">Scripts</span>
 <span class="t" style="left:60px;top:228px">Shaders</span>
 <!-- scrollbar -->
 <div class="a" style="left:224px;top:0;width:15px;height:235px;background:linear-gradient(90deg,#c9c9c9,#b4b4b4);border-left:1px solid #9c9c9c;border-right:1px solid #9c9c9c"></div>
 <!-- right area -->
 <div class="a" style="left:239px;top:1px;width:813px;height:17px;background:#dedede;border-bottom:1px solid #9a9a9a"></div>
 <span class="t" style="left:245px;top:4px;font-weight:bold;letter-spacing:1.3px">Assets</span>
 <span class="s" style="left:272px;top:96px;letter-spacing:0.9px">Editor</span>
 <span class="s" style="left:331px;top:96px;letter-spacing:0.5px">SampleSce…</span>
 <span class="s" style="left:407px;top:96px;letter-spacing:0.55px">Standard A…</span>
 <div class="a" style="left:239px;top:218px;width:813px;height:17px;background:#dedede;border-top:1px solid #9a9a9a"></div>
</div>

<!-- icon overlay -->
<svg class="a" style="left:0;top:0" width="1331" height="747" viewBox="0 0 1331 747"><defs>
<linearGradient id="fb" x1="0" y1="0" x2="0" y2="1"><stop offset="0" stop-color="#84919a"/><stop offset="1" stop-color="#4f5b62"/></linearGradient>
<linearGradient id="ft" x1="0" y1="0" x2="0" y2="1"><stop offset="0" stop-color="#e6e6e6"/><stop offset="1" stop-color="#a9a9a9"/></linearGradient>
<linearGradient id="bf" x1="0" y1="0" x2="1" y2="1"><stop offset="0" stop-color="#76838a"/><stop offset="0.5" stop-color="#6a777e"/><stop offset="0.5" stop-color="#5f6c73"/><stop offset="1" stop-color="#525e65"/></linearGradient>
<linearGradient id="bt" x1="0" y1="0" x2="0" y2="1"><stop offset="0" stop-color="#efefef"/><stop offset="1" stop-color="#bdbdbd"/></linearGradient>
<linearGradient id="thumb" x1="0" y1="0" x2="1" y2="0"><stop offset="0" stop-color="#a3b2cf"/><stop offset="1" stop-color="#6d80a6"/></linearGradient>
<linearGradient id="wthumb" x1="0" y1="0" x2="1" y2="0"><stop offset="0" stop-color="#d8d8d8"/><stop offset="0.5" stop-color="#f2f2f2"/><stop offset="1" stop-color="#d0d0d0"/></linearGradient>
<clipPath id="cliptree"><rect x="0" y="490" width="224" height="235"/></clipPath>
<g id="fold">
<path d="M0.5 3 L0.5 1.5 Q0.5 0.5 1.5 0.5 L5 0.5 Q6 0.5 6.5 1.5 L13.5 1.5 Q14.5 1.5 14.5 2.5 L14.5 4 L0.5 4 Z" fill="#d6d6d6" stroke="#3e474c" stroke-width="0.8"/>
<rect x="0.3" y="3.3" width="14.4" height="8.7" rx="1.5" fill="url(#fb)" stroke="#3e474c" stroke-width="0.6"/>
<rect x="1" y="5.5" width="13" height="0.9" fill="#aebbc0"/>
</g>
<g id="bigfold">
<path d="M0.5 4 Q0.5 0 4 0 L20 0 Q22.5 0 23.5 2.5 L52 2.5 Q55.5 2.5 55.5 6 L55.5 10 L0.5 10 Z" fill="url(#bt)"/>
<path d="M0 10 L22 10 Q24 10 25 7.5 L53 7.5 Q56 7.5 56 10.5 L56 42 Q56 44.5 53.5 44.5 L2.5 44.5 Q0 44.5 0 42 Z" fill="url(#bf)"/>
<rect x="1" y="44.5" width="54" height="1.2" fill="#000" opacity="0.18"/>
</g>
<g id="tri"><polygon points="0,0 8,4.5 0,9" fill="#6c6c6c"/></g>
<g id="trid"><polygon points="0,0 9,0 4.5,8" fill="#6c6c6c"/></g>
<g id="menuic"><polygon points="0,1.5 5,1.5 2.5,4" fill="#444"/><rect x="6" y="0" width="8" height="1" fill="#333"/><rect x="6" y="2" width="8" height="1" fill="#333"/><rect x="6" y="4" width="8" height="1" fill="#333"/></g>
<g id="lock"><rect x="0" y="4.5" width="7" height="5" fill="#3d3d3d"/><path d="M1 2.5 Q1 0.5 3.2 0.5 Q5.5 0.5 5.5 2.5 L5.5 4.5" stroke="#3d3d3d" stroke-width="1.1" fill="none"/></g>
<g id="mag"><circle cx="3" cy="3" r="2.5" stroke="#555" stroke-width="1" fill="none"/><path d="M4.8 4.8 L7 7" stroke="#555" stroke-width="1.2"/></g>
<g id="dd"><polygon points="0,0 5,0 2.5,3" fill="#333"/></g>
</defs>

<!-- hand -->
<path d="M18.6 35.2 Q17.8 33.6 19.3 33.1 Q20.6 32.8 22.2 34.8 L21.1 30.3 Q20.8 28.6 22.2 28.4 Q23.6 28.2 24.1 29.6 Q24.4 27.3 25.9 27.2 Q27.3 27.2 27.4 28.8 Q27.9 27.8 29 28 Q30.3 28.3 30.5 29.7 Q31.2 29.5 32.3 30 Q33.8 30.7 33.7 32.2 L33.2 36.2 Q32.3 40 29.9 42 L24.2 42.4 Q21.2 40.2 18.6 35.2 Z" fill="#f2f2f2" stroke="#111" stroke-width="1"/>
<path d="M24.1 29.6 L24.4 33.2 M27.4 28.8 L27.5 32.6 M30.5 29.7 L30.6 33.2" stroke="#111" stroke-width="0.9"/>
<!-- move -->
<g transform="translate(58.5 34.5)">
<path d="M0 -9 L4.5 -4.5 L1.5 -4.5 L1.5 -1.5 L4.5 -1.5 L4.5 -4.5 L9 0 L4.5 4.5 L4.5 1.5 L1.5 1.5 L1.5 4.5 L4.5 4.5 L0 9 L-4.5 4.5 L-1.5 4.5 L-1.5 1.5 L-4.5 1.5 L-4.5 4.5 L-9 0 L-4.5 -4.5 L-4.5 -1.5 L-1.5 -1.5 L-1.5 -4.5 L-4.5 -4.5 Z" fill="#fafafa" stroke="#2a2a2a" stroke-width="0.6"/>
</g>
<!-- rotate -->
<path d="M86.5 31 Q90 26.5 94.5 28 Q96 28.6 96.8 30.5" stroke="#111" stroke-width="2.2" fill="none"/>
<polygon points="84,27.5 84,32.8 89.3,32.8" fill="#111"/>
<path d="M85.8 36.5 Q87.5 40.5 91 40.5 Q94.5 40.5 96 38" stroke="#111" stroke-width="2.2" fill="none"/>
<polygon points="98,35 98,40.5 92.8,35" fill="#111"/>
<!-- scale -->
<rect x="120.2" y="32.2" width="5" height="5" stroke="#111" stroke-width="2" fill="#eee"/>
<g stroke="#111" stroke-width="1.6" fill="none"><path d="M115 28 L118 31 M130 28 L127 31 M115 41.5 L118 38.5 M130 41.5 L127 38.5"/></g>
<g fill="#111"><polygon points="114,27 118.5,27 114,31.5"/><polygon points="131,27 126.5,27 131,31.5"/><polygon points="114,42.5 118.5,42.5 114,38"/><polygon points="131,42.5 126.5,42.5 131,38"/></g>
<!-- rect tool -->
<g fill="#111"><circle cx="148" cy="28" r="1.9"/><circle cx="161.2" cy="28" r="1.9"/><circle cx="148" cy="40.8" r="1.9"/><circle cx="161.2" cy="40.8" r="1.9"/></g>
<path d="M151 28 L158 28 M151 40.8 L158 40.8 M148 30.5 L148 38.3 M161.2 30.5 L161.2 38.3" stroke="#111" stroke-width="1.4"/>
<circle cx="154.5" cy="34.4" r="2.1" stroke="#111" stroke-width="0.9" fill="none"/>
<!-- center icon -->
<rect x="198" y="32" width="6" height="5" fill="#8a8a8a" stroke="#444" stroke-width="0.8"/>
<rect x="203.5" y="31" width="3.5" height="7" fill="#6f6f6f" stroke="#555" stroke-width="0.6"/>
<circle cx="202.8" cy="34.5" r="1.6" fill="#e8475a"/>
<!-- local icon cube -->
<g transform="translate(1.5 0)"><path d="M271 28.5 L276 31 L276 37 L271 39.5 L266 37 L266 31 Z" fill="#9a9a9a" stroke="#555" stroke-width="0.8"/>
<path d="M266 31 L271 33.5 L276 31 M271 33.5 L271 39.5" stroke="#555" stroke-width="0.7" fill="none"/>
<path d="M271 35.5 L271 39.5 L268 38 Z" fill="#d8353f"/>
<path d="M268.5 37 L273.5 37 L271 39.5 Z" fill="#d8353f"/></g>
<!-- play pause step -->
<polygon points="625,28 640.5,35 625,42" fill="#1a1a1a"/>
<rect x="659.5" y="29" width="3.5" height="13" fill="#1a1a1a"/><rect x="665.5" y="29" width="3.5" height="13" fill="#1a1a1a"/>
<polygon points="689,28 701,35 689,42" fill="#1a1a1a"/><rect x="701" y="29" width="3" height="13" fill="#1a1a1a"/>
<!-- dropdown arrows top -->
<use href="#dd" x="1117" y="34"/><use href="#dd" x="1207" y="34"/><use href="#dd" x="1307" y="34"/>

<!-- tab icons -->
<g fill="#333"><rect x="8" y="55.5" width="1.5" height="1.5"/><rect x="10" y="58.5" width="1.5" height="1.5"/><rect x="10" y="61.5" width="1.5" height="1.5"/>
<rect x="11.5" y="55.5" width="7.5" height="1"/><rect x="12.5" y="58.8" width="6.5" height="1"/><rect x="12.5" y="61.8" width="6.5" height="1"/></g>
<path d="M274.5 54 L274.5 65 M280.5 54 L280.5 65 M272 56.5 L283 56.5 M272 62.5 L283 62.5" stroke="#888" stroke-width="1"/><path d="M277.5 54 L277.5 65 M272 59.5 L283 59.5" stroke="#333" stroke-width="1.1"/>
<path d="M377 59.4 L381 57 A4.4 4.4 0 1 0 381 61.8 Z" fill="#262626"/>
<circle cx="1070" cy="59.5" r="5.2" fill="#333"/>
<rect x="1069.2" y="58.2" width="1.8" height="4.3" fill="#fff"/><rect x="1068.2" y="62" width="3.6" height="1" fill="#fff"/><rect x="1069.2" y="56.2" width="1.8" height="1.2" fill="#fff"/><rect x="1068.4" y="58.2" width="1.5" height="0.9" fill="#fff"/>
<path d="M7.5 462 Q7.5 460.5 9 460.5 L11.5 460.5 L12.5 461.5 L18 461.5 Q19 461.5 19 462.5 L19 469 L7.5 469 Z" fill="#c8c8c8" stroke="#555" stroke-width="1"/>
<path d="M7.5 463.5 L19 463.5" stroke="#555" stroke-width="0.8"/>
<rect x="110.5" y="459.5" width="8" height="10" fill="#f2f2f2" stroke="#222" stroke-width="1.2"/>
<path d="M112 462 L117 462 M112 464 L115 464 M112 466 L117 466 M112 468 L115 468" stroke="#777" stroke-width="0.8"/>

<!-- panel menu icons / locks -->
<use href="#menuic" x="242" y="61"/>
<use href="#menuic" x="1034" y="61"/>
<use href="#menuic" x="1312" y="61"/>
<use href="#lock" x="1299" y="57"/>
<use href="#menuic" x="1036" y="466"/>
<use href="#lock" x="1022" y="461"/>

<!-- hierarchy toolbar -->
<use href="#dd" x="49" y="74"/>
<use href="#mag" x="69" y="72"/><polygon points="75,74 79,74 77,76.5" fill="#555"/>
<!-- hierarchy triangles -->
<use href="#tri" x="5" y="93"/><use href="#tri" x="5" y="109"/><use href="#trid" x="4.5" y="126"/>
<use href="#tri" x="19" y="333"/>
<use href="#tri" x="5" y="349"/><use href="#tri" x="5" y="365"/><use href="#tri" x="5" y="381"/><use href="#tri" x="5" y="397"/><use href="#tri" x="5" y="413"/>

<!-- scene toolbar icons -->
<use href="#dd" x="380.5" y="74"/>
<g stroke="#222" stroke-width="1" fill="none"><circle cx="438.4" cy="76.3" r="2.6"/>
<path d="M438.4 70.5 L438.4 72 M438.4 80.6 L438.4 82.1 M432.6 76.3 L434.1 76.3 M442.7 76.3 L444.2 76.3 M434.3 72.2 L435.3 73.2 M441.5 79.4 L442.5 80.4 M442.5 72.2 L441.5 73.2 M435.3 79.4 L434.3 80.4"/></g>
<path d="M458 74.5 L461 74.5 L465 71 L465 81.5 L461 78 L458 78 Z" fill="#9a9a9a" stroke="#444" stroke-width="0.9"/>
<path d="M467 73 Q469 76.3 467 79.6 M469.5 71 Q472.5 76.3 469.5 81.6" stroke="#444" stroke-width="1" fill="none"/>
<rect x="485.8" y="72.3" width="10.5" height="8" fill="#f4f4f4" stroke="#222" stroke-width="1.2"/>
<path d="M486.4 80 L486.4 76.5 L489 73.8 L491.5 77 L493.5 75.5 L495.7 77.5 L495.7 80 Z" fill="#222"/>
<use href="#dd" x="506" y="75"/>
<use href="#dd" x="825" y="74"/>
<use href="#mag" x="845" y="72"/><polygon points="851,74 855,74 853,76.5" fill="#555"/>

<!-- project toolbar -->
<use href="#dd" x="49" y="479"/>
<use href="#mag" x="677" y="477"/>
<g fill="#444" transform="translate(0 -3.5)"><polygon points="986,490 990.5,483 995,490"/><circle cx="993" cy="482.5" r="3"/><rect x="993" y="485.5" width="5" height="5"/></g>
<g transform="translate(0 -4.5)"><path d="M1008 481 L1013.5 481 L1020 487.5 L1015.5 492 L1008 484.5 Z" fill="#444"/><circle cx="1011" cy="483.5" r="1" fill="#ddd"/></g>
<polygon transform="translate(0 -1.2)" points="1035.5,477.5 1037.3,481.8 1041.8,482 1038.3,484.8 1039.5,489.2 1035.5,486.7 1031.5,489.2 1032.7,484.8 1029.2,482 1033.7,481.8" fill="#9a9a9a"/>

<!-- project tree -->
<use href="#trid" x="4" y="496"/><use href="#fold" x="14" y="493"/>
<use href="#trid" x="18.5" y="512"/><use href="#fold" x="28" y="509.5"/>
<use href="#fold" x="42" y="525.5"/><use href="#fold" x="42" y="541.5"/>
<use href="#trid" x="18.5" y="560"/><use href="#fold" x="28" y="557.5"/>
<use href="#fold" x="42" y="573.5"/><use href="#fold" x="42" y="589.5"/>
<use href="#tri" x="33" y="607"/><use href="#fold" x="42" y="605.5"/>
<use href="#fold" x="42" y="621.5"/><use href="#fold" x="42" y="637.5"/><use href="#fold" x="42" y="653.5"/>
<use href="#trid" x="32.5" y="672"/><use href="#fold" x="42" y="669.5"/>
<use href="#fold" x="56" y="685.5"/>
<use href="#fold" x="42" y="701.5"/><g clip-path="url(#cliptree)"><use href="#fold" x="42" y="717.5"/></g>

<!-- scrollbar -->
<polygon points="231.5,497 235,502.5 228,502.5" fill="#3a3a3a"/>
<rect x="225" y="508" width="13" height="200" rx="6.5" fill="url(#wthumb)" stroke="#9a9a9a" stroke-width="0.8"/>
<rect x="225" y="532" width="13" height="74" rx="6.5" fill="url(#thumb)" stroke="#4d5f85" stroke-width="0.9"/>
<polygon points="228,714 235,714 231.5,719.5" fill="#3a3a3a"/>

<!-- big folders -->
<use href="#bigfold" x="259" y="528"/><use href="#bigfold" x="335" y="528"/><use href="#bigfold" x="411" y="528"/>
<polygon points="294,496.5 298,499.5 294,502.5" fill="#888"/>
<!-- slider -->
<rect x="981" y="715.5" width="55" height="3" rx="1.5" fill="#6a6a6a"/>
<circle cx="1012.5" cy="717" r="5" fill="#eee" stroke="#777" stroke-width="1"/>
</svg>
</body></html>
